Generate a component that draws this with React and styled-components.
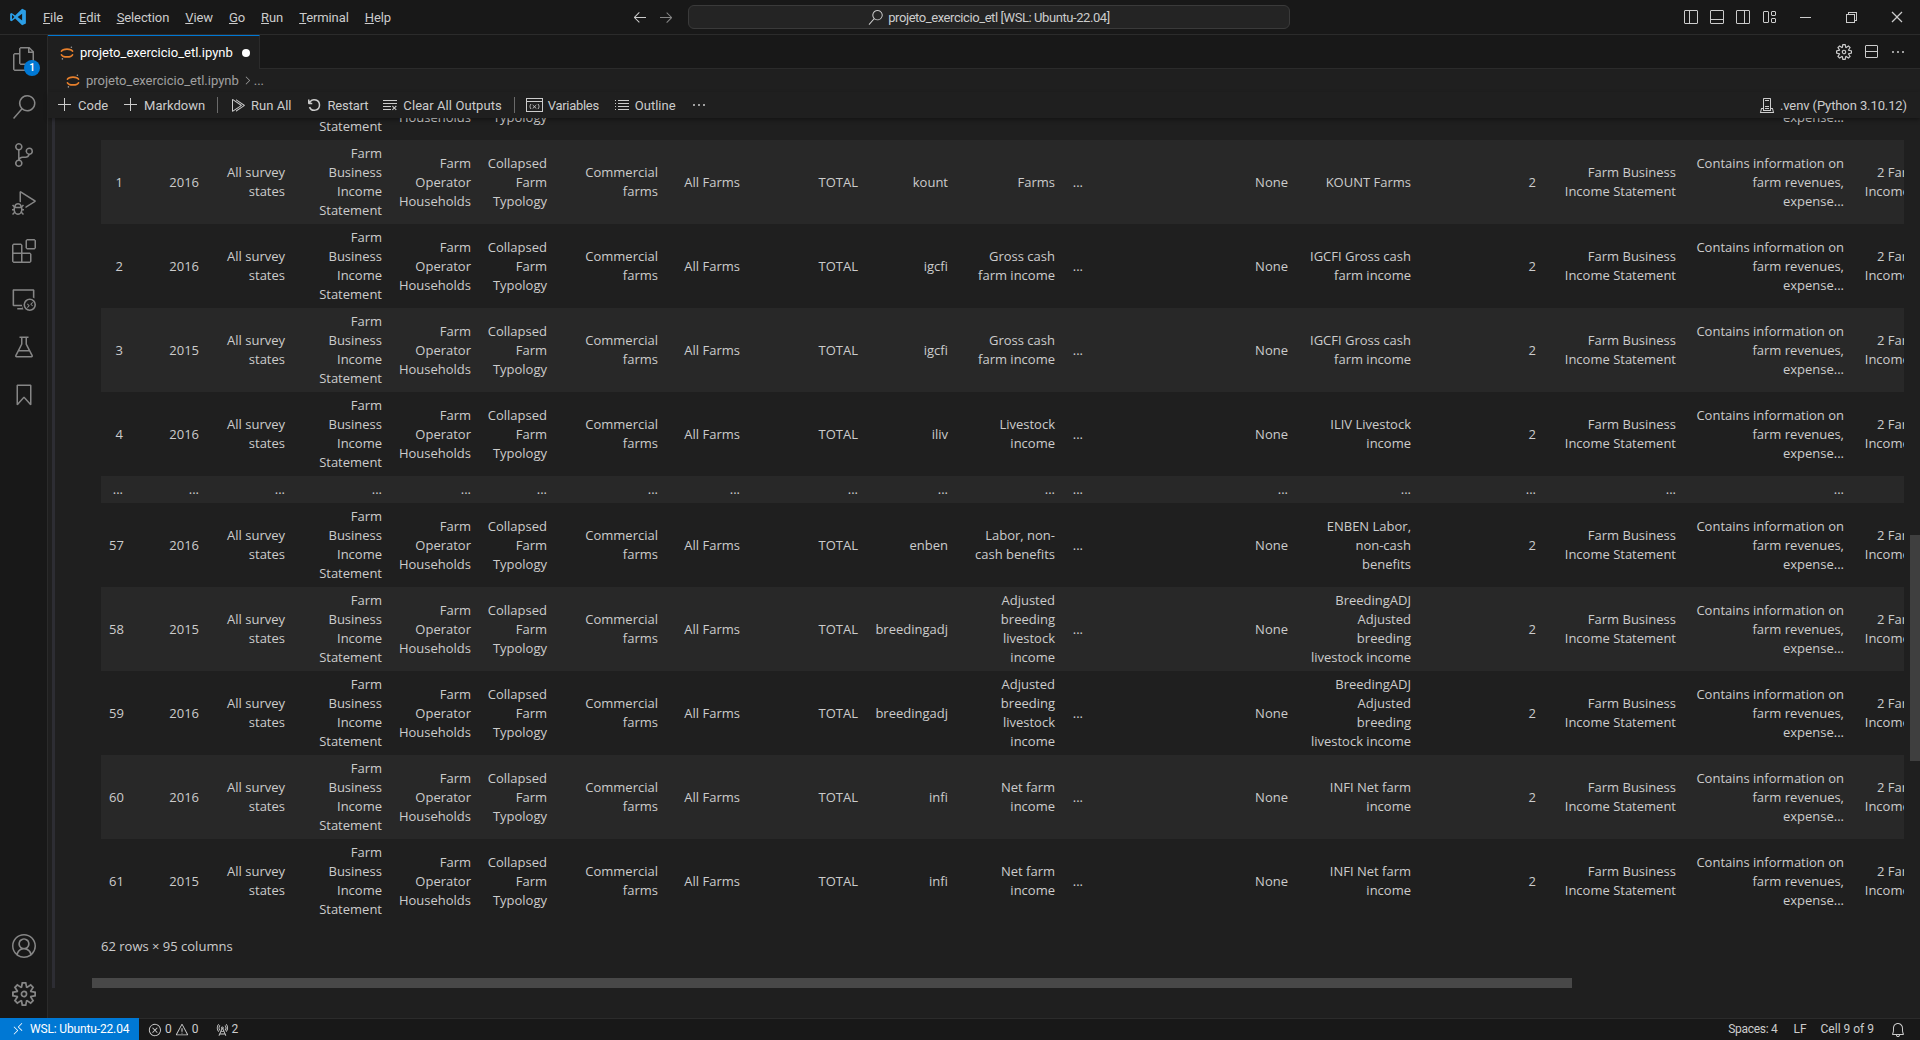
import React from "react";
import styled, { createGlobalStyle } from "styled-components";
import {
  VscFiles, VscSearch, VscSourceControl, VscDebugAlt, VscExtensions, VscRemoteExplorer, VscBeaker, VscBookmark,
  VscAccount, VscSettingsGear, VscArrowLeft, VscArrowRight, VscLayoutSidebarLeftOff, VscLayoutPanelOff,
  VscLayoutSidebarRightOff, VscLayout, VscChromeMinimize, VscChromeRestore, VscChromeClose, VscSplitVertical,
  VscEllipsis, VscAdd, VscRunAll, VscDebugRestart, VscClearAll, VscListUnordered, VscServerEnvironment,
  VscRemote, VscError, VscWarning, VscRadioTower, VscBell, VscChevronRight,
} from "react-icons/vsc";

const UI = `Roboto, "Liberation Sans", sans-serif`;
const DATA = `"Open Sans", "Liberation Sans", sans-serif`;

const Global = createGlobalStyle`
  html, body { margin: 0; padding: 0; height: 100%; background: #181818; overflow: hidden; }
  #root { height: 100%; }
  * { box-sizing: border-box; }
`;

const Shell = styled.div`
  width: 1920px; height: 1040px; display: flex; flex-direction: column;
  background: #181818; color: #cccccc; font: 13px/19px ${UI}; overflow: hidden;
`;

/* Title bar */
const TitleBar = styled.header`
  height: 35px; flex: none; display: flex; align-items: center; border-bottom: 1px solid #2b2b2b; position: relative;
`;
const Logo = styled.svg`width: 18px; height: 18px; margin-left: 9px; flex: none;`;
const Menu = styled.nav`display: flex; gap: 16px; margin-left: 16px; width: 360px; flex: none; letter-spacing: -0.1px;`;
const MenuItem = styled.span`
  color: #cccccc; white-space: nowrap;
  &::first-letter { text-decoration: underline; }
`;
const NavArrows = styled.div`display: flex; gap: 10px; margin-left: 229px; align-items: center; flex: none;`;
const NavArrow = styled.span`display: flex; font-size: 16px; color: ${p => (p.$dim ? "#858585" : "#cccccc")};`;
const CommandCenter = styled.div`
  width: 602px; height: 24px; margin-left: 14px; display: flex; align-items: center; justify-content: center; gap: 5px;
  border: 1px solid #3a3a3a; border-radius: 6px; background: #242424; color: #cccccc; white-space: nowrap; flex: none;
  letter-spacing: -0.42px;
  svg { font-size: 15px; color: #cccccc; }
`;
const LayoutIcons = styled.div`display: flex; gap: 10px; margin-left: 393px; font-size: 16px; color: #cccccc; align-items: center; flex: none;`;
const WindowControls = styled.div`display: flex; margin-left: auto;`;
const WinButton = styled.span`width: 46px; height: 34px; display: flex; align-items: center; justify-content: center; font-size: 16px; color: #cccccc;`;

/* Main */
const Main = styled.div`flex: 1; min-height: 0; display: flex;`;
const ActivityBar = styled.aside`
  width: 48px; flex: none; display: flex; flex-direction: column; border-right: 1px solid #2b2b2b; background: #181818;
`;
const ActivityItem = styled.div`
  height: 48px; flex: none; display: flex; align-items: center; justify-content: center; position: relative;
  font-size: 24px; color: #868686;
`;
const Badge = styled.span`
  position: absolute; left: 24px; top: 25px; width: 16px; height: 16px; border-radius: 50%; background: #0078d4; color: #fff;
  font: 600 10px/16px ${UI}; text-align: center;
`;
const ActivitySpacer = styled.div`flex: 1;`;

const Editor = styled.main`flex: 1; min-width: 0; display: flex; flex-direction: column; background: #1f1f1f; position: relative;`;
const TabBar = styled.div`height: 34px; flex: none; display: flex; align-items: stretch; background: #181818; border-bottom: 1px solid #2b2b2b;`;
const Tab = styled.div`
  width: 212px; margin-bottom: -1px; display: flex; align-items: center; background: #1f1f1f; border-top: 1px solid #0078d4; border-right: 1px solid #2b2b2b;
  padding-left: 12px; color: #ffffff; white-space: nowrap;
`;
const TabLabel = styled.span`margin-left: 6px;`;
const DirtyDot = styled.span`width: 8px; height: 8px; border-radius: 50%; background: #fff; margin-left: 9px;`;
const TabActions = styled.div`margin-left: auto; display: flex; align-items: center; gap: 11px; padding-right: 14px; font-size: 16px; color: #cccccc;`;
const Breadcrumbs = styled.div`
  height: 23px; flex: none; display: flex; align-items: center; padding-left: 18px; color: #a0a0a0; white-space: nowrap;
`;
const CrumbText = styled.span`margin-left: 6px;`;
const Toolbar = styled.div`
  height: 26px; flex: none; display: flex; align-items: center; padding: 0 13px 0 9px; gap: 15px; color: #cccccc; white-space: nowrap;
  box-shadow: 0 2px 4px rgba(0,0,0,.35); position: relative; z-index: 2; background: #1f1f1f;
`;
const Tool = styled.span`
  display: flex; align-items: center; gap: 5px; flex: none;
  letter-spacing: ${p => p.$ls || 0}px; margin-left: ${p => p.$ml || 0}px;
  svg { font-size: 16px; flex: none; }
`;
const ToolSep = styled.span`width: 1px; height: 16px; background: #6a6a6a; margin: 0 -3px;`;
const ToolSepTight = styled(ToolSep)`margin-right: -4px;`;
const Kernel = styled(Tool)`margin-left: auto; letter-spacing: -0.1px;`;

/* Notebook */
const NotebookBody = styled.div`flex: 1; min-height: 0; display: flex; overflow: hidden; position: relative;`;
const FocusBar = styled.div`width: 3px; height: 870px; margin-left: 4px; background: #2d2d33; flex: none;`;
const Output = styled.div`flex: none; width: 1828px; margin-left: 37px; margin-top: -62px;`;
const TableClip = styled.div`width: 1803px; margin-left: 9px; overflow: hidden;`;
const DataTable = styled.table`
  width: 1883px; table-layout: fixed; border-collapse: collapse; font: 13px/19px ${DATA}; color: #cccccc;
  tbody tr:nth-child(even) { background: #282828; }
`;
const Cell = styled.td`
  padding: 4px 8px; text-align: right; vertical-align: middle; white-space: pre-line; overflow: visible;
`;
const Shape = styled.p`margin: 14px 0 0 9px; font: 13px/19px ${DATA}; color: #cccccc;`;
const HThumb = styled.div`width: 1480px; height: 10px; margin-top: 22px; background: #484848;`;
const VThumb = styled.div`position: absolute; right: 0; top: 417px; width: 10px; height: 226px; background: #3f3f3f;`;

/* Status bar */
const StatusBar = styled.footer`
  height: 22px; flex: none; display: flex; align-items: center; border-top: 1px solid #2b2b2b; font: 12px/21px ${UI}; color: #cccccc; white-space: nowrap; background: #181818;
  svg { font-size: 14px; flex: none; }
`;
const RemoteButton = styled.div`width: 139px; height: 22px; margin-top: -1px; background: #0078d4; color: #fff; display: flex; align-items: center; padding-left: 11px; gap: 5px; letter-spacing: -0.15px;`;
const StatusGroup = styled.div`display: flex; align-items: center; gap: 3px; margin-left: ${p => p.$ml || 0}px;`;
const StatusRight = styled.div`margin-left: auto; display: flex; align-items: center; gap: 16px; padding-right: 14px; svg { font-size: 16px; }`;
const StatusSpaces = styled.span`letter-spacing: -0.3px;`;
const StatusEol = styled.span`margin-right: -2px;`;

const Jupyter = ({ size = 14 }) => (
  <svg width={size} height={size} viewBox="0 0 14 14" fill="none" style={{ flex: "none" }}>
    <path d="M1.5 5.2C3 2.4 11 2.4 12.5 5.2" stroke="#e8802c" strokeWidth="1.7" strokeLinecap="round" />
    <path d="M1.5 8.8C3 11.6 11 11.6 12.5 8.8" stroke="#e8802c" strokeWidth="1.7" strokeLinecap="round" />
    <circle cx="11.4" cy="1.2" r=".8" fill="#9a9a9a" /><circle cx="2.4" cy="12.9" r=".8" fill="#9a9a9a" />
  </svg>
);
const VarsIcon = () => (
  <svg width="17" height="16" viewBox="0 0 17 16" fill="none" stroke="currentColor" style={{ flex: "none" }}>
    <rect x=".5" y="1.5" width="16" height="13" />
    <path d="M.5 4.5h16" />
    <path d="M5 7c-1.3 1.4-1.3 3.6 0 5M12 7c1.3 1.4 1.3 3.6 0 5M6.7 8l3.6 3.5M10.3 8l-3.6 3.5" strokeWidth=".9" />
  </svg>
);

const menus = ["File", "Edit", "Selection", "View", "Go", "Run", "Terminal", "Help"];
const colWidths = [30, 76, 86, 97, 89, 76, 111, 82, 118, 90, 107, 28, 205, 123, 125, 140, 168, 132];

const makeRow = (i, year, code, name, full) => [
  i, year, "All survey\nstates", "Farm\nBusiness\nIncome\nStatement", "Farm\nOperator\nHouseholds", "Collapsed\nFarm\nTypology",
  "Commercial\nfarms", "All Farms", "TOTAL", code, name, "...", "None", full, "2", "Farm Business\nIncome Statement",
  "Contains information on\nfarm revenues,\nexpense...", "2 Farm Business\nIncome Statement",
];
const adj = "Adjusted\nbreeding\nlivestock\nincome";
const adjF = "BreedingADJ\nAdjusted\nbreeding\nlivestock income";
const rows = [
  makeRow("0", "2015", "kount", "Farms", "KOUNT Farms"),
  makeRow("1", "2016", "kount", "Farms", "KOUNT Farms"),
  makeRow("2", "2016", "igcfi", "Gross cash\nfarm income", "IGCFI Gross cash\nfarm income"),
  makeRow("3", "2015", "igcfi", "Gross cash\nfarm income", "IGCFI Gross cash\nfarm income"),
  makeRow("4", "2016", "iliv", "Livestock\nincome", "ILIV Livestock\nincome"),
  Array(18).fill("..."),
  makeRow("57", "2016", "enben", "Labor, non-\ncash benefits", "ENBEN Labor,\nnon-cash\nbenefits"),
  makeRow("58", "2015", "breedingadj", adj, adjF),
  makeRow("59", "2016", "breedingadj", adj, adjF),
  makeRow("60", "2016", "infi", "Net farm\nincome", "INFI Net farm\nincome"),
  makeRow("61", "2015", "infi", "Net farm\nincome", "INFI Net farm\nincome"),
];

export default function App() {
  return (
    <Shell>
      <Global />
      <TitleBar>
        <Logo viewBox="0 0 24 24">
          <path d="M17.5 1 8.2 10.1 3.5 6.5 1.5 7.5v9l2 1 4.7-3.6 9.3 9.1 5-2.2V3.2L17.5 1ZM4 15V9l3.2 3L4 15Zm13.5 1.5L11.5 12l6-4.5v9Z" fill="#2b9ee6" />
        </Logo>
        <Menu>{menus.map(m => <MenuItem key={m}>{m}</MenuItem>)}</Menu>
        <NavArrows>
          <NavArrow><VscArrowLeft /></NavArrow>
          <NavArrow $dim><VscArrowRight /></NavArrow>
        </NavArrows>
        <CommandCenter><VscSearch />projeto_exercicio_etl [WSL: Ubuntu-22.04]</CommandCenter>
        <LayoutIcons><VscLayoutSidebarLeftOff /><VscLayoutPanelOff /><VscLayoutSidebarRightOff /><VscLayout /></LayoutIcons>
        <WindowControls>
          <WinButton><VscChromeMinimize /></WinButton>
          <WinButton><VscChromeRestore /></WinButton>
          <WinButton><VscChromeClose /></WinButton>
        </WindowControls>
      </TitleBar>
      <Main>
        <ActivityBar>
          <ActivityItem><VscFiles /><Badge>1</Badge></ActivityItem>
          <ActivityItem><VscSearch /></ActivityItem>
          <ActivityItem><VscSourceControl /></ActivityItem>
          <ActivityItem><VscDebugAlt /></ActivityItem>
          <ActivityItem><VscExtensions /></ActivityItem>
          <ActivityItem><VscRemoteExplorer /></ActivityItem>
          <ActivityItem><VscBeaker /></ActivityItem>
          <ActivityItem><VscBookmark /></ActivityItem>
          <ActivitySpacer />
          <ActivityItem><VscAccount /></ActivityItem>
          <ActivityItem><VscSettingsGear /></ActivityItem>
        </ActivityBar>
        <Editor>
          <TabBar>
            <Tab><Jupyter /><TabLabel>projeto_exercicio_etl.ipynb</TabLabel><DirtyDot /></Tab>
            <TabActions><VscSettingsGear /><VscSplitVertical /><VscEllipsis /></TabActions>
          </TabBar>
          <Breadcrumbs><Jupyter /><CrumbText>projeto_exercicio_etl.ipynb</CrumbText><VscChevronRight style={{ marginLeft: 2 }} /><span>...</span></Breadcrumbs>
          <Toolbar>
            <Tool><VscAdd />Code</Tool>
            <Tool><VscAdd />Markdown</Tool>
            <ToolSep />
            <Tool><VscRunAll />Run All</Tool>
            <Tool $ls={-0.15}><VscDebugRestart />Restart</Tool>
            <Tool $ls={0.08} $ml={-1}><VscClearAll />Clear All Outputs</Tool>
            <ToolSepTight />
            <Tool $ls={-0.3}><VarsIcon />Variables</Tool>
            <Tool><VscListUnordered />Outline</Tool>
            <Tool><VscEllipsis /></Tool>
            <Kernel><VscServerEnvironment />.venv (Python 3.10.12)</Kernel>
          </Toolbar>
          <NotebookBody>
            <FocusBar />
            <Output>
              <TableClip>
                <DataTable>
                  <colgroup>{colWidths.map((w, i) => <col key={i} style={{ width: w }} />)}</colgroup>
                  <tbody>
                    {rows.map((r, i) => <tr key={i}>{r.map((c, j) => <Cell key={j}>{c}</Cell>)}</tr>)}
                  </tbody>
                </DataTable>
              </TableClip>
              <Shape>62 rows × 95 columns</Shape>
              <HThumb />
            </Output>
            <VThumb />
          </NotebookBody>
        </Editor>
      </Main>
      <StatusBar>
        <RemoteButton><VscRemote />WSL: Ubuntu-22.04</RemoteButton>
        <StatusGroup $ml={9}><VscError />0<VscWarning />0</StatusGroup>
        <StatusGroup $ml={16}><VscRadioTower />2</StatusGroup>
        <StatusRight><StatusSpaces>Spaces: 4</StatusSpaces><StatusEol>LF</StatusEol><span>Cell 9 of 9</span><VscBell /></StatusRight>
      </StatusBar>
    </Shell>
  );
}
